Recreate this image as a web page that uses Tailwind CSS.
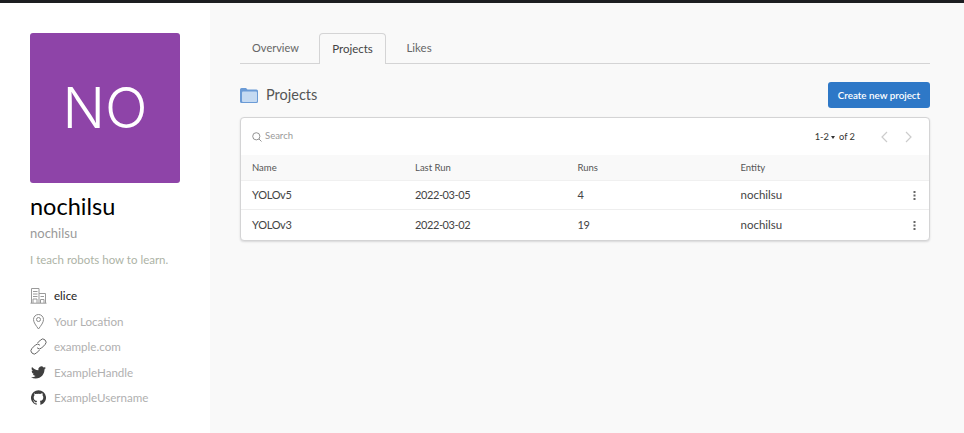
<!DOCTYPE html>
<html lang="en">
<head>
	<meta charset="UTF-8">
	<script src="https://cdn.jsdelivr.net/npm/@tailwindcss/browser@4"></script>
	<title>nochilsu</title>
</head>
<body class="h-[433px] overflow-hidden bg-[#f9f9f9] font-['Lato','Noto_Sans',sans-serif]">
	<div class="h-[3px] bg-[#1c1e21]"></div>
	<div class="flex h-[430px]">
		<!-- profile -->
		<aside class="w-[210px] shrink-0 bg-white pl-[30px] pt-[30px]">
			<div class="flex h-[150px] w-[150px] items-center justify-center rounded-[3px] bg-[#8e44a8] font-['Inter',sans-serif] text-[56px] font-[350] text-white">NO</div>
			<h1 class="mt-[7px] text-[23.500px] leading-[32px] text-black">nochilsu</h1>
			<p class="mt-[1px] text-[13px] leading-[20px] text-[#9a9a9a]">nochilsu</p>
			<p class="mt-[8px] text-[11.500px] leading-[18px] text-[#adb3a6]">I teach robots how to learn.</p>
			<ul class="mt-[14px] text-[11.600px] text-[#b0b0b0]">
				<li class="flex h-[25.500px] items-center gap-[7px] text-[#222]">
					<svg class="w-[17px] h-[17px]" viewBox="0 0 17 17" fill="none" stroke="#9a9a9a" stroke-width="1"><path d="M1.500 16V1.500h7.500V16M9 6.500h6.500V16M.5 16.200h16M3 4.500h4.500M3 7h4.500M3 9.500h4.500M3 16v-4h4v4M10.500 16v-3.500h3.500V16M10.500 9.500h3.500"/></svg>
					<span>elice</span>
				</li>
				<li class="flex h-[25.500px] items-center gap-[7px]">
					<svg class="w-[17px] h-[17px]" viewBox="0 0 17 17" fill="none" stroke="#8a8a8a" stroke-width="1"><path d="M8.500 16C6 12.500 3.500 9.500 3.500 6.500a5 5 0 0 1 10 0C13.500 9.500 11 12.500 8.500 16z"/><circle cx="8.500" cy="6.500" r="2"/></svg>
					<span>Your Location</span>
				</li>
				<li class="flex h-[25.500px] items-center gap-[7px]">
					<svg class="w-[17px] h-[17px]" viewBox="0 0 17 17" fill="none" stroke="#666" stroke-width="1"><path d="M7.500 5l3-3a3.200 3.200 0 0 1 4.600 4.500l-3.500 3.500a3.200 3.200 0 0 1-4.500-.200"/><path d="M9.500 12l-3 3A3.200 3.200 0 0 1 1.900 10.500L5.400 7a3.200 3.200 0 0 1 4.500.200"/></svg>
					<span>example.com</span>
				</li>
				<li class="flex h-[25.500px] items-center gap-[7px]">
					<svg class="mx-[1px] w-[15px] h-[15px]" viewBox="0 0 24 24" fill="#3f3f3f"><path d="M23.950 4.570a10 10 0 0 1-2.820.770 4.960 4.960 0 0 0 2.160-2.720c-.950.550-2 .950-3.130 1.190a4.920 4.920 0 0 0-8.380 4.480C7.690 8.090 4.070 6.120 1.640 3.160a4.820 4.820 0 0 0-.670 2.480c0 1.710.870 3.210 2.190 4.100a4.900 4.900 0 0 1-2.230-.620v.060a4.920 4.920 0 0 0 3.950 4.830 5 5 0 0 1-2.210.080 4.940 4.940 0 0 0 4.600 3.420A9.870 9.870 0 0 1 0 19.540a13.940 13.940 0 0 0 7.550 2.210c9.050 0 14-7.500 14-13.980 0-.210 0-.420-.020-.630a9.940 9.940 0 0 0 2.420-2.570z"/></svg>
					<span>ExampleHandle</span>
				</li>
				<li class="flex h-[25.500px] items-center gap-[7px]">
					<svg class="mx-[1px] w-[15px] h-[15px]" viewBox="0 0 24 24" fill="#3f3f3f"><path d="M12 .300a12 12 0 0 0-3.790 23.390c.600.110.820-.260.820-.580v-2.030c-3.340.730-4.040-1.610-4.040-1.610-.550-1.390-1.330-1.760-1.330-1.760-1.090-.740.080-.730.080-.730 1.200.080 1.840 1.240 1.840 1.240 1.070 1.830 2.810 1.300 3.490 1 .110-.780.420-1.300.760-1.600-2.670-.300-5.470-1.330-5.470-5.930 0-1.310.470-2.380 1.240-3.220-.140-.300-.540-1.520.100-3.180 0 0 1-.320 3.300 1.230a11.500 11.500 0 0 1 6 0c2.280-1.550 3.290-1.230 3.290-1.230.640 1.660.240 2.880.120 3.180a4.650 4.650 0 0 1 1.230 3.220c0 4.610-2.800 5.630-5.480 5.920.420.360.810 1.100.810 2.220v3.290c0 .320.210.690.820.570A12 12 0 0 0 12 .300"/></svg>
					<span>ExampleUsername</span>
				</li>
			</ul>
		</aside>

		<!-- main -->
		<main class="flex-1 pl-[30px] pr-[34px] pt-[30px]">
			<nav class="flex h-[31px] items-end border-b border-[#d4d4d5] text-[11px] text-[#666]">
				<a class="flex h-[31px] w-[71px] items-center justify-center pt-[1px]">Overview</a>
				<a class="-mb-px ml-[8px] flex h-[31px] w-[67px] items-center justify-center rounded-t-[4px] border border-b-0 border-[#d4d4d5] bg-[#f9f9f9] text-[11.500px] text-[#444]">Projects</a>
				<a class="ml-[7px] flex h-[31px] w-[52px] items-center justify-center pt-[1px] text-[11.500px]">Likes</a>
			</nav>

			<div class="mt-[18px] flex h-[26px] items-center justify-between">
				<div class="flex items-center gap-[8px]">
					<svg class="w-[18px] h-[16px]" viewBox="0 0 18 16"><path d="M0 2.500A1.500 1.500 0 0 1 1.500 1h4.500l1.500 1.500h9A1.500 1.500 0 0 1 18 4v10.500a1.500 1.500 0 0 1-1.500 1.500h-15A1.500 1.500 0 0 1 0 14.500z" fill="#6b9bd6"/><rect x="2" y="4.500" width="15" height="10.500" rx="1" fill="#c5daf2"/></svg>
					<h2 class="text-[14.500px] text-[#555]">Projects</h2>
				</div>
				<button class="h-[26px] w-[102px] rounded-[3px] bg-[#2e78c7] text-[9.800px] font-semibold text-white">Create new project</button>
			</div>

			<section class="mt-[9px] overflow-hidden rounded-[4px] border border-[#d4d4d5] bg-white shadow-[0_1px_2px_rgba(34,36,38,0.15)]">
				<div class="flex h-[37px] items-center pl-[11px] pr-[16px]">
					<svg class="w-[10px] h-[10px]" viewBox="0 0 10 10" fill="none" stroke="#888" stroke-width="0.900"><circle cx="4.300" cy="4.300" r="3.600"/><path d="M7 7l2.500 2.500"/></svg>
					<span class="ml-[3px] text-[9.500px] text-[#999]">Search</span>
					<span class="ml-auto text-[9.300px] text-[#333]">1-2</span>
					<span class="ml-[2px] mt-[1px] h-0 w-0 border-x-[2.500px] border-t-[3px] border-x-transparent border-t-[#333]"></span>
					<span class="ml-[4px] text-[9.300px] text-[#333]">of 2</span>
					<svg class="ml-[25px] w-[9px] h-[12px]" viewBox="0 0 9 12" fill="none" stroke="#ccc" stroke-width="1.200"><path d="M7 1L2 6l5 5"/></svg>
					<svg class="ml-[15px] w-[9px] h-[12px]" viewBox="0 0 9 12" fill="none" stroke="#ccc" stroke-width="1.200"><path d="M2 1l5 5-5 5"/></svg>
				</div>
				<div class="grid h-[26px] grid-cols-[163px_162.500px_163px_1fr] items-center border-b border-[#f0f0f0] bg-[#f9f9f9] pl-[11px] pt-[1px] text-[9.500px] text-[#555]">
					<span>Name</span><span>Last Run</span><span>Runs</span><span>Entity</span>
				</div>
				<div class="grid h-[29px] grid-cols-[163px_162.500px_163px_1fr_16px] items-center border-b border-[#eeeeee] pl-[11px] text-[11px] text-[#444]">
					<span class="tracking-[-0.300px]">YOLOv5</span><span class="tracking-[-0.400px]">2022-03-05</span><span class="tracking-[-0.400px]">4</span><span class="text-[11.500px]">nochilsu</span>
					<svg class="w-[3px] h-[9px]" viewBox="0 0 3 9" fill="#666"><rect x="0.500" y="0" width="2" height="2"/><rect x="0.500" y="3.500" width="2" height="2"/><rect x="0.500" y="7" width="2" height="2"/></svg>
				</div>
				<div class="grid h-[30px] grid-cols-[163px_162.500px_163px_1fr_16px] items-center pl-[11px] text-[11px] text-[#444]">
					<span class="tracking-[-0.300px]">YOLOv3</span><span class="tracking-[-0.400px]">2022-03-02</span><span class="tracking-[-0.400px]">19</span><span class="text-[11.500px]">nochilsu</span>
					<svg class="w-[3px] h-[9px]" viewBox="0 0 3 9" fill="#666"><rect x="0.500" y="0" width="2" height="2"/><rect x="0.500" y="3.500" width="2" height="2"/><rect x="0.500" y="7" width="2" height="2"/></svg>
				</div>
			</section>
		</main>
	</div>
</body>
</html>
